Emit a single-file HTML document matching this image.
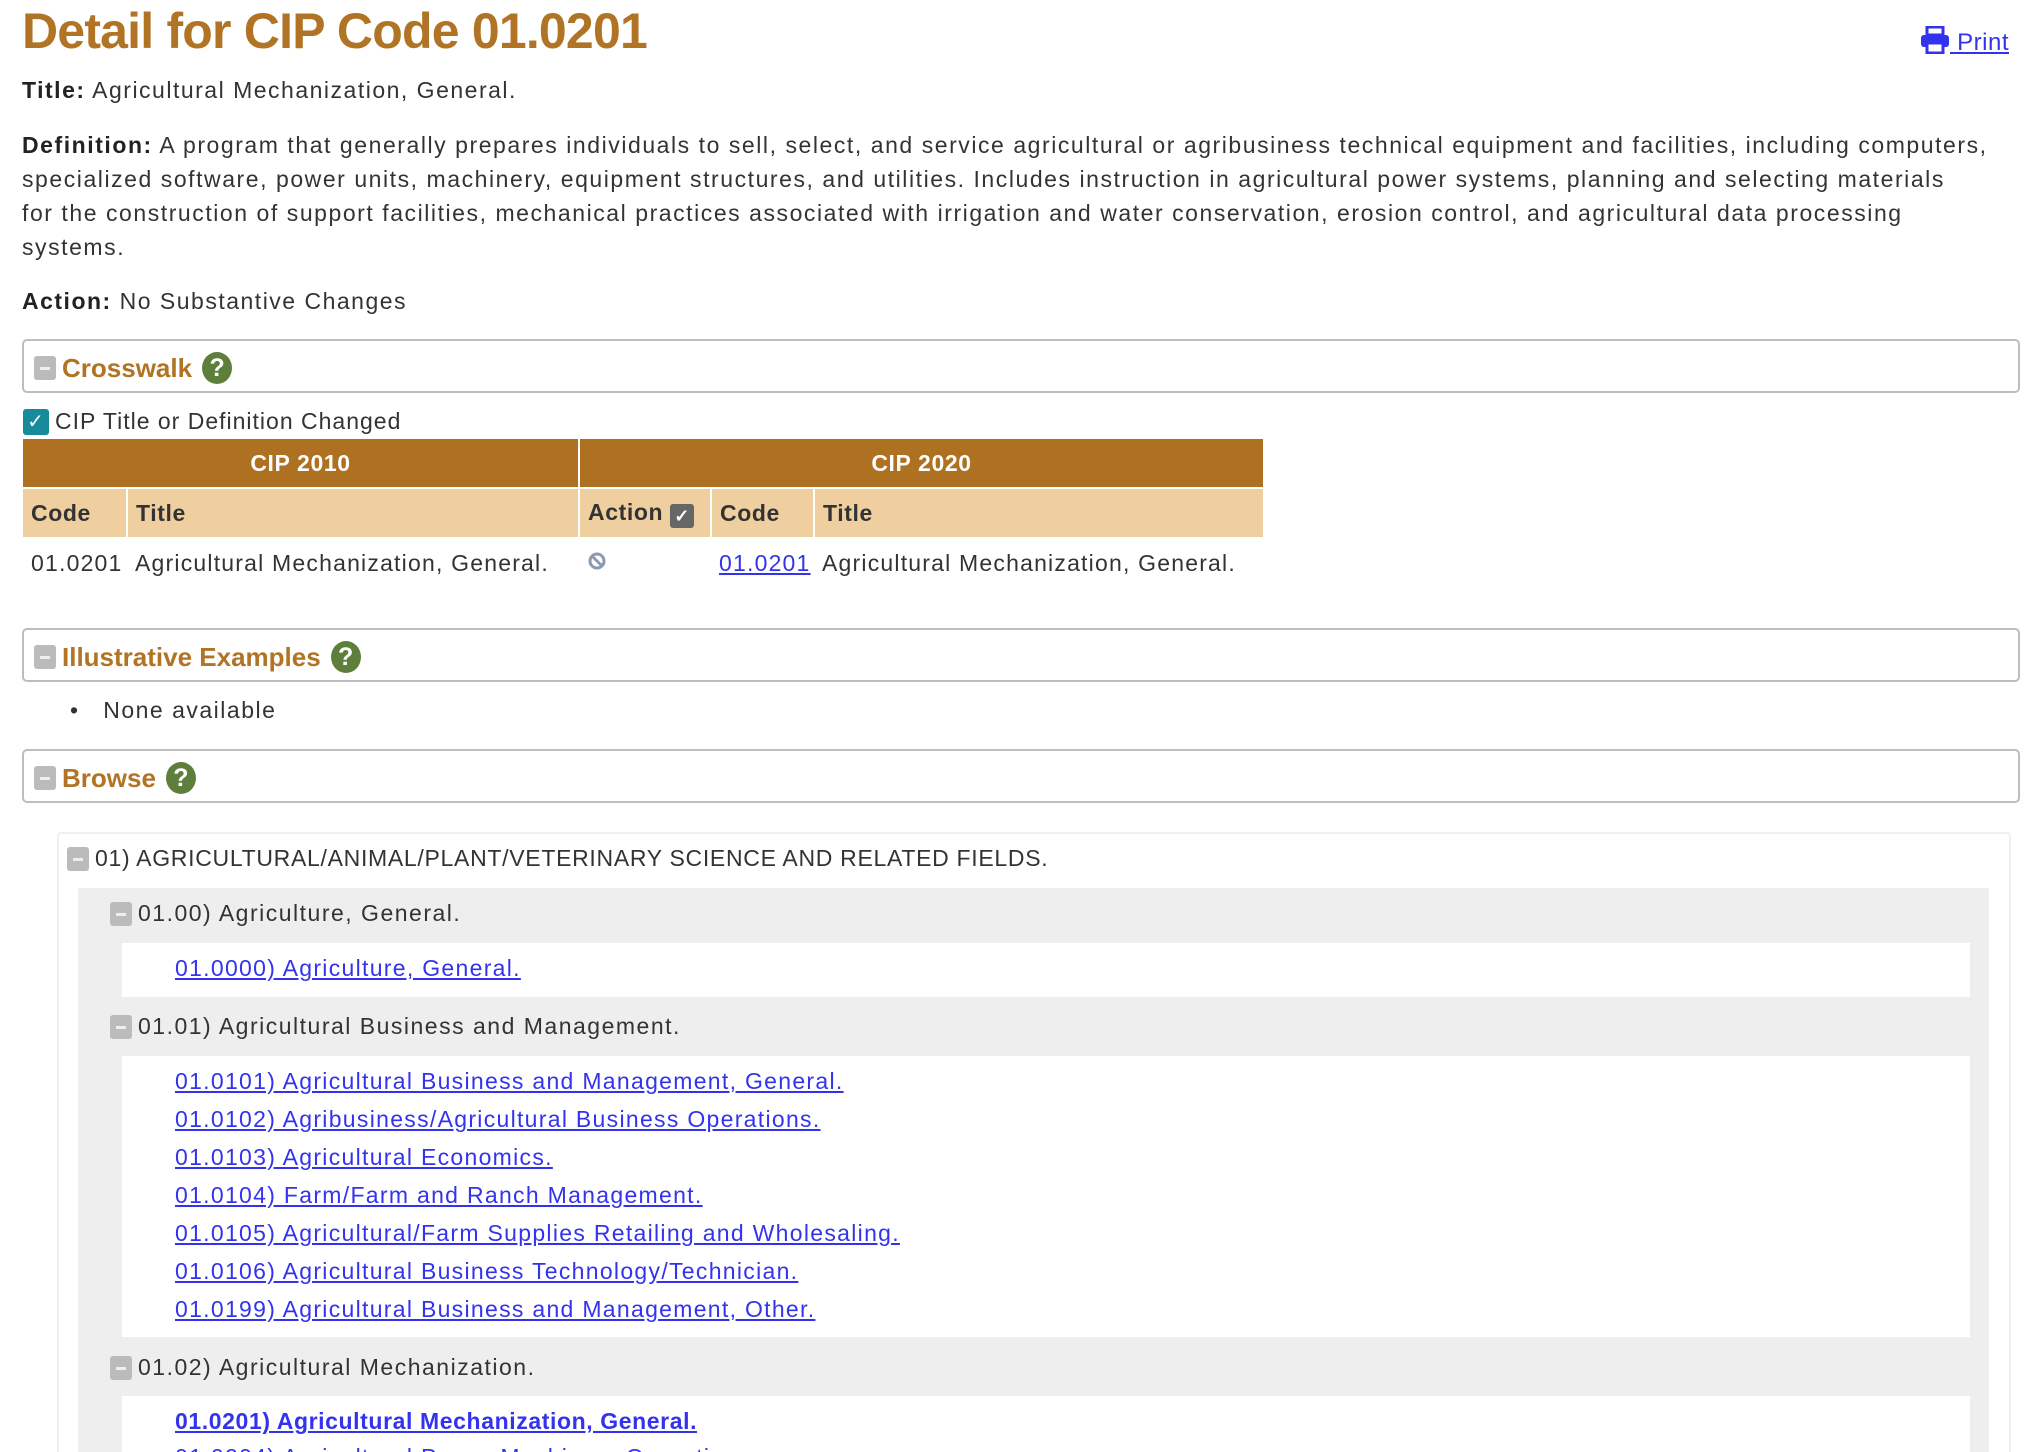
<!DOCTYPE html>
<html style="width:2036px;height:1452px;overflow:hidden"><head><meta charset="utf-8"><style>
*{margin:0;padding:0;box-sizing:border-box}
body{width:2036px;height:1452px;overflow:hidden;background:#fff;font-family:"Liberation Sans",sans-serif;color:#333;font-size:23px;letter-spacing:1.5px;position:relative}
.a{position:absolute;white-space:nowrap}
h1{position:absolute;left:22px;top:2px;font-size:50px;font-weight:bold;color:#b07424;letter-spacing:-0.8px}
b{color:#222}
.box{position:absolute;left:22px;width:1998px;height:54px;border:2px solid #bdbdbd;border-radius:5px}
.sec{position:absolute;left:10px;top:11px;font-size:26px;font-weight:bold;color:#b07424;display:flex;align-items:center;gap:6px;letter-spacing:0}
.min{display:inline-block;width:22px;height:24px;background:#bbb;border-radius:3px;position:relative}
.min:after{content:"";position:absolute;left:6px;top:11px;width:10px;height:3px;background:#eee}
.q{display:inline-block;width:30px;height:32px;border-radius:50%;background:#5e7f3c;color:#fff;font-size:25px;text-align:center;line-height:32px;margin-left:4px}
table{position:absolute;left:23px;top:439px;border-collapse:collapse;letter-spacing:0.6px}
th.h{background:#ae7021;color:#fff;height:49px;font-size:23px;border-right:2px solid #fff}
th.s{background:#efcfa0;color:#333;height:49px;text-align:left;padding-left:8px;border-right:2px solid #fff;border-top:2px solid #fff}
td{height:52px;padding-left:8px;letter-spacing:1.2px}
a{color:#3333ee;text-decoration:underline}
.lnk{position:absolute;left:175px;font-size:23px;white-space:nowrap;letter-spacing:1.3px}
.t{position:absolute;display:flex;align-items:center;gap:6px;white-space:nowrap}
</style></head><body>
<h1>Detail for CIP Code 01.0201</h1>
<div class="a" style="left:1920px;top:26px;font-size:24px;color:#3333ee;text-decoration:underline;letter-spacing:0.5px">
<svg width="30" height="28" viewBox="0 0 30 28" style="vertical-align:-4px"><rect x="7" y="1" width="16" height="8" fill="none" stroke="#3333ee" stroke-width="3"/><rect x="1" y="9" width="28" height="12" rx="3" fill="#3333ee"/><rect x="7" y="17" width="16" height="10" fill="#fff" stroke="#3333ee" stroke-width="3"/></svg> Print</div>
<div class="a" style="left:22px;top:77px"><b>Title:</b> Agricultural Mechanization, General.</div>
<div class="a" style="left:22px;top:128px;line-height:34px;letter-spacing:1.55px"><b>Definition:</b> A program that generally prepares individuals to sell, select, and service agricultural or agribusiness technical equipment and facilities, including computers,<br>specialized software, power units, machinery, equipment structures, and utilities. Includes instruction in agricultural power systems, planning and selecting materials<br>for the construction of support facilities, mechanical practices associated with irrigation and water conservation, erosion control, and agricultural data processing<br>systems.</div>
<div class="a" style="left:22px;top:288px"><b>Action:</b> No Substantive Changes</div>
<div class="box" style="top:339px"><div class="sec"><span class="min"></span>Crosswalk<span class="q">?</span></div></div>
<div class="a" style="left:23px;top:408px;display:flex;align-items:center;gap:6px;letter-spacing:1px"><span style="display:inline-block;width:26px;height:26px;background:#178b9b;border-radius:3px;color:#fff;text-align:center;line-height:26px;font-size:20px">✓</span>CIP Title or Definition Changed</div>
<table>
<tr><th class="h" colspan="2" style="width:556px">CIP 2010</th><th class="h" colspan="3" style="width:684px;border-right:none">CIP 2020</th></tr>
<tr><th class="s" style="width:104px">Code</th><th class="s" style="width:452px">Title</th><th class="s" style="width:132px">Action <span style="display:inline-block;width:24px;height:24px;background:#666;border-radius:3px;color:#fff;font-size:18px;text-align:center;line-height:24px;vertical-align:-2px">✓</span></th><th class="s" style="width:103px">Code</th><th class="s" style="width:449px;border-right:none">Title</th></tr>
<tr><td>01.0201</td><td>Agricultural Mechanization, General.</td><td><svg width="20" height="20" viewBox="0 0 20 20"><circle cx="10" cy="10" r="7" fill="none" stroke="#8a9bb0" stroke-width="3"/><line x1="5" y1="5" x2="15" y2="15" stroke="#8a9bb0" stroke-width="3"/></svg></td><td><a>01.0201</a></td><td>Agricultural Mechanization, General.</td></tr>
</table>
<div class="box" style="top:628px"><div class="sec"><span class="min"></span>Illustrative Examples<span class="q">?</span></div></div>
<div class="a" style="left:70px;top:697px">•&nbsp;&nbsp;&nbsp;None available</div>
<div class="box" style="top:749px"><div class="sec"><span class="min"></span>Browse<span class="q">?</span></div></div>
<div style="position:absolute;left:57px;top:832px;width:1954px;height:620px;border:2px solid #f0f0f0;border-bottom:none;border-radius:4px 4px 0 0"></div>
<div class="t" style="left:67px;top:845px;letter-spacing:0.7px"><span class="min"></span>01) AGRICULTURAL/ANIMAL/PLANT/VETERINARY SCIENCE AND RELATED FIELDS.</div>
<div style="position:absolute;left:78px;top:888px;width:1911px;height:564px;background:#eee"></div>
<div class="t" style="left:110px;top:900px"><span class="min"></span>01.00) Agriculture, General.</div>
<div style="position:absolute;left:122px;top:943px;width:1848px;height:54px;background:#fff"></div>
<a class="lnk" style="top:955px">01.0000) Agriculture, General.</a>
<div class="t" style="left:110px;top:1013px"><span class="min"></span>01.01) Agricultural Business and Management.</div>
<div style="position:absolute;left:122px;top:1056px;width:1848px;height:281px;background:#fff"></div>
<a class="lnk" style="top:1068px">01.0101) Agricultural Business and Management, General.</a>
<a class="lnk" style="top:1106px">01.0102) Agribusiness/Agricultural Business Operations.</a>
<a class="lnk" style="top:1144px">01.0103) Agricultural Economics.</a>
<a class="lnk" style="top:1182px">01.0104) Farm/Farm and Ranch Management.</a>
<a class="lnk" style="top:1220px">01.0105) Agricultural/Farm Supplies Retailing and Wholesaling.</a>
<a class="lnk" style="top:1258px">01.0106) Agricultural Business Technology/Technician.</a>
<a class="lnk" style="top:1296px">01.0199) Agricultural Business and Management, Other.</a>
<div class="t" style="left:110px;top:1354px"><span class="min"></span>01.02) Agricultural Mechanization.</div>
<div style="position:absolute;left:122px;top:1396px;width:1848px;height:56px;background:#fff"></div>
<a class="lnk" style="top:1408px;font-weight:bold;letter-spacing:0.6px">01.0201) Agricultural Mechanization, General.</a>
<div style="position:absolute;left:175px;top:1444px;height:8px;width:560px;overflow:hidden"><a style="white-space:nowrap;letter-spacing:1.3px;display:block">01.0204) Agricultural Power Machinery Operation.</a></div>
</body></html>
